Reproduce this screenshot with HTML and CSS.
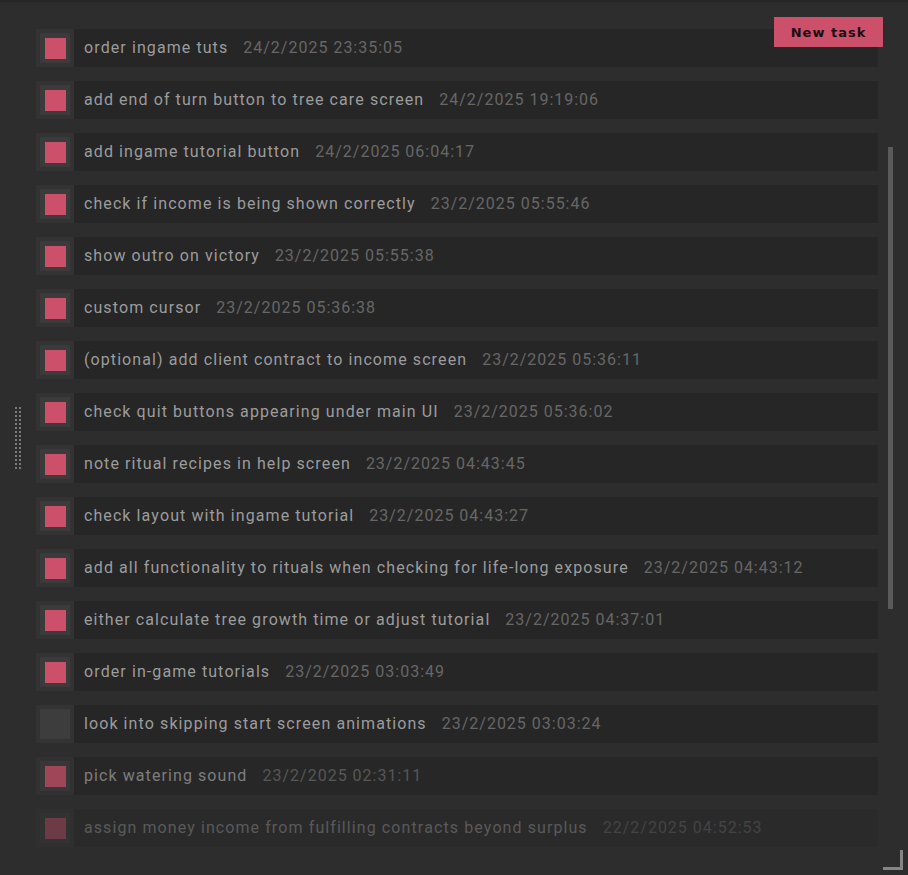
FILE: index.html
```html
<!DOCTYPE html>
<html>
<head>
<meta charset="utf-8">
<link rel="stylesheet" href="styles.css">
</head>
<body>
<div class="panel">
  <button class="new-task">New task</button>
  <div class="handle"></div>
  <div class="scrollbar"></div>
  <div class="resize"></div>
  <ul class="list">
    <li class="row"><span class="check done"><span class="tick"></span></span><span class="body"><span class="title">order ingame tuts</span><span class="date">24/2/2025 23:35:05</span></span></li>
    <li class="row"><span class="check done"><span class="tick"></span></span><span class="body"><span class="title">add end of turn button to tree care screen</span><span class="date">24/2/2025 19:19:06</span></span></li>
    <li class="row"><span class="check done"><span class="tick"></span></span><span class="body"><span class="title">add ingame tutorial button</span><span class="date">24/2/2025 06:04:17</span></span></li>
    <li class="row"><span class="check done"><span class="tick"></span></span><span class="body"><span class="title">check if income is being shown correctly</span><span class="date">23/2/2025 05:55:46</span></span></li>
    <li class="row"><span class="check done"><span class="tick"></span></span><span class="body"><span class="title">show outro on victory</span><span class="date">23/2/2025 05:55:38</span></span></li>
    <li class="row"><span class="check done"><span class="tick"></span></span><span class="body"><span class="title">custom cursor</span><span class="date">23/2/2025 05:36:38</span></span></li>
    <li class="row"><span class="check done"><span class="tick"></span></span><span class="body"><span class="title">(optional) add client contract to income screen</span><span class="date">23/2/2025 05:36:11</span></span></li>
    <li class="row"><span class="check done"><span class="tick"></span></span><span class="body"><span class="title">check quit buttons appearing under main UI</span><span class="date">23/2/2025 05:36:02</span></span></li>
    <li class="row"><span class="check done"><span class="tick"></span></span><span class="body"><span class="title">note ritual recipes in help screen</span><span class="date">23/2/2025 04:43:45</span></span></li>
    <li class="row"><span class="check done"><span class="tick"></span></span><span class="body"><span class="title">check layout with ingame tutorial</span><span class="date">23/2/2025 04:43:27</span></span></li>
    <li class="row"><span class="check done"><span class="tick"></span></span><span class="body"><span class="title">add all functionality to rituals when checking for life-long exposure</span><span class="date">23/2/2025 04:43:12</span></span></li>
    <li class="row"><span class="check done"><span class="tick"></span></span><span class="body"><span class="title">either calculate tree growth time or adjust tutorial</span><span class="date">23/2/2025 04:37:01</span></span></li>
    <li class="row"><span class="check done"><span class="tick"></span></span><span class="body"><span class="title">order in-game tutorials</span><span class="date">23/2/2025 03:03:49</span></span></li>
    <li class="row"><span class="check open"><span class="tick"></span></span><span class="body"><span class="title">look into skipping start screen animations</span><span class="date">23/2/2025 03:03:24</span></span></li>
    <li class="row fade1"><span class="check done"><span class="tick"></span></span><span class="body"><span class="title">pick watering sound</span><span class="date">23/2/2025 02:31:11</span></span></li>
    <li class="row fade2"><span class="check done"><span class="tick"></span></span><span class="body"><span class="title">assign money income from fulfilling contracts beyond surplus</span><span class="date">22/2/2025 04:52:53</span></span></li>
  </ul>
</div>
</body>
</html>
```
FILE: styles.css
```css
html, body {
  margin: 0;
  padding: 0;
  background: #2d2d2d;
}
body {
  width: 908px;
  height: 875px;
  overflow: hidden;
  font-family: Roboto, "Liberation Sans", sans-serif;
}
.panel {
  position: relative;
  height: 873px;
  border-top: 2px solid #262626;
}
.list {
  list-style: none;
  margin: 0;
  padding: 27px 30px 0 36px;
  display: flex;
  flex-direction: column;
  gap: 14px;
}
.row {
  display: flex;
  height: 38px;
}
.check {
  width: 38px;
  height: 38px;
  background: #333333;
  padding: 4px;
  box-sizing: border-box;
  flex: none;
}
.tick {
  display: block;
  width: 30px;
  height: 30px;
  background: #3b3b3b;
  box-sizing: border-box;
  padding: 5px 4px 4px 5px;
}
.done .tick::after {
  content: "";
  display: block;
  width: 21px;
  height: 21px;
  background: #cc506a;
}
.open .tick {
  background: #3d3d3d;
}
.body {
  flex: 1;
  background: #262626;
  display: flex;
  align-items: center;
  padding: 0 0 2px 10px;
  gap: 15px;
  font-size: 16px;
  letter-spacing: 1.08px;
  font-kerning: none;
  white-space: nowrap;
}
.title {
  color: #9c9c9c;
}
.date {
  color: #666666;
  letter-spacing: 1px;
}
.fade1 { opacity: 0.72; }
.fade2 { opacity: 0.4; }
.new-task {
  position: absolute;
  left: 774px;
  top: 15px;
  width: 109px;
  height: 30px;
  padding: 0;
  background: #cc506a;
  border: none;
  color: #1a0c11;
  font-family: "DejaVu Sans", sans-serif;
  font-weight: bold;
  font-size: 13px;
  letter-spacing: 1px;
  z-index: 2;
}
.scrollbar {
  position: absolute;
  left: 888px;
  top: 145px;
  width: 5px;
  height: 462px;
  background: #5a5a5a;
}
.resize {
  position: absolute;
  left: 883px;
  top: 848px;
  width: 17px;
  height: 17px;
  border-right: 3px solid #858585;
  border-bottom: 3px solid #858585;
}
.handle {
  position: absolute;
  left: 15px;
  top: 405px;
  width: 6px;
  height: 64px;
  background:
    repeating-linear-gradient(to bottom, #7a7a7a 0 2px, transparent 2px 4px) left top / 2px 100% no-repeat,
    repeating-linear-gradient(to bottom, #7a7a7a 0 2px, transparent 2px 4px) right top / 2px 100% no-repeat;
}
```
